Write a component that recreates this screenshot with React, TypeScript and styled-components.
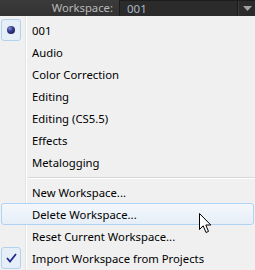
import styled, { createGlobalStyle } from "styled-components";

const Global = createGlobalStyle`
  html, body {
    margin: 0;
    padding: 0;
    background: #f0f0f0;
  }
  body {
    font-family: "Noto Sans", "Open Sans", sans-serif;
  }
`;

const Header = styled.div`
  height: 16px;
  display: flex;
  align-items: stretch;
  justify-content: flex-end;
  background: linear-gradient(#3b3b3b, #323232);
`;

const HeaderLabel = styled.span`
  color: #b9b9b9;
  font-size: 11.3px;
  line-height: 16px;
  margin-right: 6px;
`;

const Select = styled.div`
  width: 135px;
  display: flex;
  align-items: center;
  background: #2b2b2b;
  border-top: 1px solid #1c1c1c;
  border-left: 1px solid #1c1c1c;
`;

const SelectValue = styled.span`
  flex: 1;
  padding-left: 7px;
  color: #a9b6c4;
  font-size: 11.5px;
  line-height: 15px;
`;

const SelectDivider = styled.span`
  width: 1px;
  align-self: stretch;
  background: #1a1a1a;
  border-right: 1px solid #3c3c3c;
`;

const Arrow = styled.span`
  width: 16px;
  display: flex;
  justify-content: center;
  align-items: center;
`;

const Menu = styled.div`
  position: relative;
  padding: 3px 0 0;
  background: linear-gradient(
    to right,
    transparent 25px,
    #e2e3e3 25px,
    #e2e3e3 26px,
    #ffffff 26px,
    #ffffff 27px,
    transparent 27px
  );
  height: 251px;
  overflow: hidden;
`;

const Item = styled.div<{ $hover?: boolean }>`
  height: 22px;
  display: flex;
  align-items: center;
  margin: 0 1px;
  box-sizing: border-box;
  border-radius: 3px;
  border: 1px solid ${(p) => (p.$hover ? "#aed3f5" : "transparent")};
  background: ${(p) =>
    p.$hover ? "linear-gradient(#f4f8fc, #e6eef7)" : "transparent"};
`;

const IconCell = styled.span<{ $on?: boolean }>`
  width: 20px;
  height: 22px;
  margin: -1px 0 -1px -1px;
  box-sizing: border-box;
  display: flex;
  align-items: center;
  justify-content: center;
  border-radius: 3px;
  border: 1px solid ${(p) => (p.$on ? "#b2d2f0" : "transparent")};
  background: ${(p) => (p.$on ? "#e6eef7" : "transparent")};
`;

const Label = styled.span`
  margin-left: 11px;
  color: #000;
  font-size: 11.3px;
  white-space: nowrap;
`;

const Separator = styled.div`
  height: 8px;
  margin-left: 28px;
  display: flex;
  align-items: center;
  &::after {
    content: "";
    flex: 1;
    height: 1px;
    background: #d7d7d7;
    box-shadow: 0 1px 0 #ffffff;
  }
`;

const Cursor = styled.svg`
  position: absolute;
  left: 199px;
  top: 197px;
`;

const Bullet = () => (
  <svg width="10" height="10" viewBox="0 0 10 10">
    <defs>
      <radialGradient id="b" cx="0.35" cy="0.3" r="0.7">
        <stop offset="0" stopColor="#8c92d8" />
        <stop offset="0.5" stopColor="#3a3f8f" />
        <stop offset="1" stopColor="#1e2260" />
      </radialGradient>
    </defs>
    <circle cx="5" cy="5" r="4" fill="url(#b)" />
  </svg>
);

const Check = () => (
  <svg width="11" height="10" viewBox="0 0 11 10">
    <path d="M1 5 L4 8.5 L10 1" fill="none" stroke="#1f2a8c" strokeWidth="1.8" />
  </svg>
);

const groups = [
  ["001", "Audio", "Color Correction", "Editing", "Editing (CS5.5)", "Effects", "Metalogging"],
  ["New Workspace...", "Delete Workspace...", "Reset Current Workspace...", "Import Workspace from Projects"],
];

export default function App() {
  return (
    <>
      <Global />
      <Header>
        <HeaderLabel>Workspace:</HeaderLabel>
        <Select>
          <SelectValue>001</SelectValue>
          <SelectDivider />
          <Arrow>
            <svg width="9" height="5" viewBox="0 0 9 5">
              <path d="M0 0 H9 L4.5 5 Z" fill="#a2a2a2" />
            </svg>
          </Arrow>
        </Select>
      </Header>
      <Menu>
        {groups[0].map((name) => (
          <Item key={name}>
            <IconCell $on={name === "001"}>{name === "001" && <Bullet />}</IconCell>
            <Label>{name}</Label>
          </Item>
        ))}
        <Separator />
        {groups[1].map((name) => {
          const checked = name.startsWith("Import");
          return (
            <Item key={name} $hover={name.startsWith("Delete")}>
              <IconCell $on={checked}>{checked && <Check />}</IconCell>
              <Label>{name}</Label>
            </Item>
          );
        })}
        <Cursor width="13" height="21" viewBox="0 0 13 21">
          <path
            d="M0.5 0.5 V16.5 L4.2 12.8 L7 19.5 L9.5 18.4 L6.8 12 H11.8 Z"
            fill="#fff"
            stroke="#000"
            strokeWidth="1"
          />
        </Cursor>
      </Menu>
    </>
  );
}
